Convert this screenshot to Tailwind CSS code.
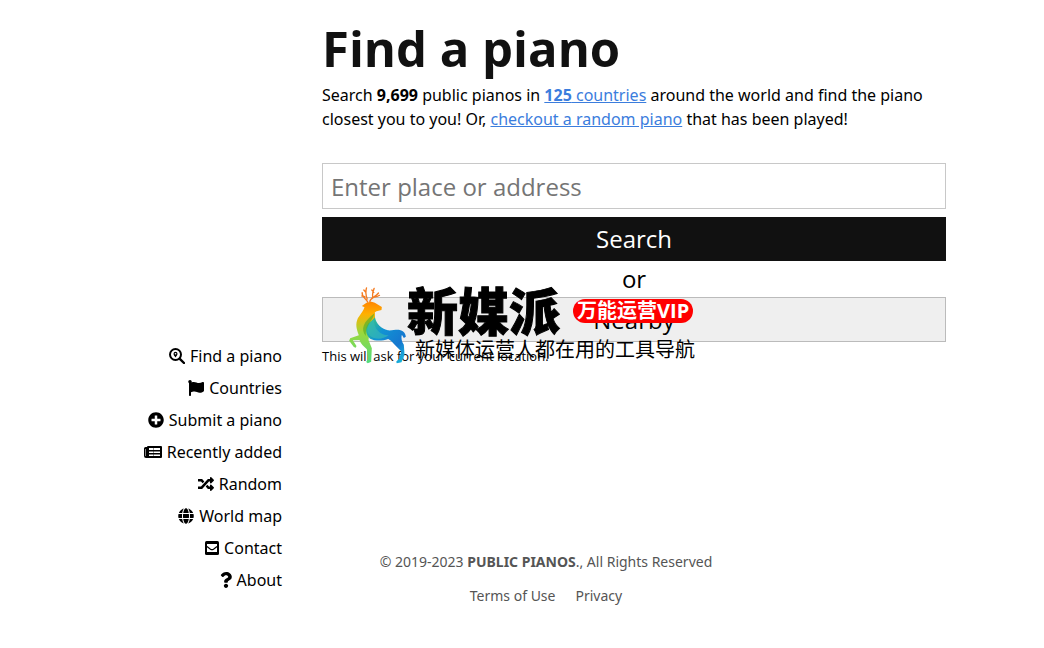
<!DOCTYPE html>
<html lang="en">
<head>
<meta charset="utf-8">
<meta name="viewport" content="width=device-width, initial-scale=1">
<title>Find a piano</title>
<script src="https://cdn.jsdelivr.net/npm/@tailwindcss/browser@4"></script>
</head>
<body class="bg-white font-['Noto_Sans','Noto_Sans_CJK_SC',sans-serif] text-[16px] leading-6 text-black">
<div class="mx-auto grid max-w-4xl grid-cols-[184px_1fr] gap-x-10 px-6 pt-5">

  <nav class="row-span-2 mb-3 flex flex-col items-end self-end" aria-label="Main">
    <a href="#find" class="flex h-8 items-center gap-[5px] whitespace-nowrap">
      <svg class="size-4" viewBox="0 0 16 16" fill="none" stroke="currentColor"><circle cx="6.5" cy="6.5" r="5.5" stroke-width="2"/><path d="M10.8 10.8 15 15" stroke-width="2.4" stroke-linecap="round"/><path d="M6.5 9.500C5.200 7.700 4.500 6.900 4.500 5.700a2 2 0 0 1 4 0C8.500 6.900 7.800 7.700 6.500 9.500z" fill="currentColor" stroke="none"/><circle cx="6.500" cy="5.700" r=".8" fill="#fff" stroke="none"/></svg>
      Find a piano</a>
    <a href="#countries" class="flex h-8 items-center gap-[5px] whitespace-nowrap">
      <svg class="size-4" viewBox="0 0 512 512" fill="currentColor"><path d="M349.565 98.783C295.978 98.783 251.721 64 184.348 64c-24.955 0-47.309 4.384-68.045 12.013a55.947 55.947 0 0 0 3.586-23.562C118.117 24.015 94.806 1.206 66.338.048 34.345-1.254 8 24.296 8 56c0 19.026 9.497 35.825 24 45.945V488c0 13.255 10.745 24 24 24h16c13.255 0 24-10.745 24-24v-94.4c28.311-12.064 63.582-22.122 114.435-22.122 53.588 0 97.844 34.783 165.217 34.783 48.169 0 86.667-16.294 122.505-40.858C506.84 359.452 512 349.571 512 339.045v-243.1c0-23.393-24.269-38.87-45.485-29.016-34.338 15.948-76.454 31.854-116.95 31.854z"/></svg>
      Countries</a>
    <a href="#submit" class="flex h-8 items-center gap-[5px] whitespace-nowrap">
      <svg class="size-4" viewBox="0 0 512 512" fill="currentColor"><path d="M256 8C119 8 8 119 8 256s111 248 248 248 248-111 248-248S393 8 256 8zm144 276c0 6.6-5.4 12-12 12h-92v92c0 6.6-5.4 12-12 12h-56c-6.6 0-12-5.4-12-12v-92h-92c-6.6 0-12-5.4-12-12v-56c0-6.6 5.4-12 12-12h92v-92c0-6.6 5.4-12 12-12h56c6.6 0 12 5.4 12 12v92h92c6.6 0 12 5.4 12 12v56z"/></svg>
      Submit a piano</a>
    <a href="#recent" class="flex h-8 items-center gap-[5px] whitespace-nowrap">
      <svg class="h-4 w-[18px]" viewBox="0 0 18 16"><path d="M4 2h13a1 1 0 0 1 1 1v10a1 1 0 0 1-1 1H2a2 2 0 0 1-2-2V4.500A1.500 1.500 0 0 1 1.500 3H3a1 1 0 0 1 1-1z" fill="currentColor"/><path d="M1.500 5H2v7h-.5zM5 4h11v2H5zM5 7.500h11V9H5zM5 10.500h11V12H5z" fill="#fff"/><path d="M9 4h1v8H9z" fill="currentColor" opacity=".4"/></svg>
      Recently added</a>
    <a href="#random" class="flex h-8 items-center gap-[5px] whitespace-nowrap">
      <svg class="size-4" viewBox="0 0 512 512" fill="currentColor"><path d="M504.971 359.029c9.373 9.373 9.373 24.569 0 33.941l-80 79.984c-15.01 15.01-40.971 4.49-40.971-16.971V416h-58.785a12.004 12.004 0 0 1-8.773-3.812l-70.556-75.596 53.333-57.143L352 336h32v-39.981c0-21.438 25.943-31.998 40.971-16.971l80 79.981zM12 176h84l52.781 56.551 53.333-57.143-70.556-75.596A11.999 11.999 0 0 0 122.785 96H12c-6.627 0-12 5.373-12 12v56c0 6.627 5.373 12 12 12zm372 0v39.984c0 21.46 25.961 31.98 40.971 16.971l80-79.984c9.373-9.373 9.373-24.569 0-33.941l-80-79.981C409.943 24.021 384 34.582 384 56.019V96h-58.785a12.004 12.004 0 0 0-8.773 3.812L96 336H12c-6.627 0-12 5.373-12 12v56c0 6.627 5.373 12 12 12h110.785c3.326 0 6.503-1.381 8.773-3.812L352 176h32z"/></svg>
      Random</a>
    <a href="#map" class="flex h-8 items-center gap-[5px] whitespace-nowrap">
      <svg class="size-4" viewBox="0 0 496 512" fill="currentColor"><path d="M336.5 160C322 70.7 287.8 8 248 8s-74 62.7-88.5 152h177zM152 256c0 22.2 1.2 43.5 3.3 64h185.3c2.1-20.5 3.3-41.8 3.3-64s-1.2-43.5-3.3-64H155.3c-2.1 20.5-3.3 41.8-3.3 64zm324.7-96c-28.6-67.9-86.5-120.4-158-141.6 24.4 33.8 41.2 84.7 50 141.6h108zM177.2 18.4C105.8 39.6 47.8 92.1 19.3 160h108c8.7-56.9 25.5-107.8 49.9-141.6zM487.4 192H372.7c2.1 21 3.3 42.5 3.3 64s-1.2 43-3.3 64h114.6c5.5-20.5 8.6-41.8 8.6-64s-3.1-43.5-8.5-64zM120 256c0-21.5 1.2-43 3.3-64H8.6C3.2 212.5 0 233.8 0 256s3.2 43.500 8.6 64h114.6c-2-21-3.2-42.500-3.2-64zm39.5 96c14.500 89.300 48.700 152 88.500 152s74-62.700 88.500-152h-177zm159.300 141.600c71.400-21.200 129.400-73.700 158-141.600h-108c-8.800 56.900-25.600 107.800-50 141.600zM19.300 352c28.600 67.900 86.500 120.400 158 141.600-24.400-33.800-41.200-84.700-50-141.600h-108z"/></svg>
      World map</a>
    <a href="#contact" class="flex h-8 items-center gap-[5px] whitespace-nowrap">
      <svg class="h-4 w-[14px]" viewBox="0 0 14 16"><rect y="1" width="14" height="14" rx="1.500" fill="currentColor"/><path d="M2 4h10v8H2z" fill="#fff"/><path d="M2 6.500 5.500 9.200Q7 10.200 8.500 9.200L12 6.500" fill="none" stroke="currentColor" stroke-width="1.200"/></svg>
      Contact</a>
    <a href="#about" class="flex h-8 items-center gap-[5px] whitespace-nowrap">
      <svg class="h-4 w-3" viewBox="0 0 384 512" fill="currentColor"><path d="M202.021 0C122.202 0 70.503 32.703 29.914 91.026c-7.363 10.58-5.093 25.086 5.178 32.874l43.138 32.709c10.373 7.865 25.132 6.026 33.253-4.148 25.049-31.381 43.63-49.449 82.757-49.449 30.764 0 68.816 19.799 68.816 49.631 0 22.552-18.617 34.134-48.993 51.164-35.423 19.86-82.299 44.576-82.299 106.405V320c0 13.255 10.745 24 24 24h72.471c13.255 0 24-10.745 24-24v-5.773c0-42.86 125.268-44.645 125.268-160.627C377.504 66.256 286.902 0 202.021 0zM192 373.459c-38.196 0-69.271 31.075-69.271 69.271 0 38.195 31.075 69.27 69.271 69.27s69.271-31.075 69.271-69.271-31.075-69.27-69.271-69.27z"/></svg>
      About</a>
  </nav>

  <main class="relative">
    <h1 class="font-['Open_Sans',sans-serif] text-[49px] leading-14 font-bold text-[#111]">Find a piano</h1>
    <p class="mt-[7px]">Search <strong>9,699</strong> public pianos in <a href="#countries" class="text-[#3b7ddd] underline"><strong>125</strong> countries</a> around the world and find the piano closest you to you! Or, <a href="#random" class="text-[#3b7ddd] underline">checkout a random piano</a> that has been played!</p>
    <form class="mt-8 flex flex-col font-['Open_Sans',sans-serif] text-[24px]">
      <input type="text" aria-label="Place or address" placeholder="Enter place or address" class="h-[46px] border border-[#c8c8c8] px-2 placeholder:text-[#757575]">
      <button type="submit" class="mt-2 h-11 bg-[#111] text-white">Search</button>
      <p class="h-9 text-center leading-9">or</p>
      <button type="button" class="h-[45px] border border-[#bbb] bg-[#efefef]">Nearby</button>
    </form>
    <p class="mt-1 font-['Open_Sans',sans-serif] text-[13px] leading-5">This will ask for your current location.</p>

    <!-- Partner banner floating over the form -->
    <aside class="absolute top-[266px] left-[27px] flex" aria-label="新媒派">
      <svg class="h-[78px] w-[58px]" viewBox="27 18 171 234">
        <defs>
          <linearGradient id="body" x1="0" y1="0" x2="0" y2="1"><stop offset="0" stop-color="#ff8500"/><stop offset=".2" stop-color="#ffb000"/><stop offset=".5" stop-color="#9bd83c"/><stop offset="1" stop-color="#4fdc80"/></linearGradient>
          <linearGradient id="back" x1="0" y1="0" x2="1" y2="1"><stop offset="0" stop-color="#43d36b"/><stop offset=".35" stop-color="#1193d4"/><stop offset=".7" stop-color="#1677cf"/><stop offset="1" stop-color="#18c7df"/></linearGradient>
        </defs>
        <path d="M82 67C78 55 63 52 65 38M73 50 64 48M80 57C76 45 74 35 78 24M76 37 70 30M88 66c0-13 15-13 26-27M97 54c-3-11 0-18 4-29M102 51c7 0 11-2 15-5M100 37l-6-7" fill="none" stroke="#f47b20" stroke-width="4" stroke-linecap="round"/>
        <path d="M78 68 93 65 103 68 124 81 123 90 108 94 103 97 104 119C100 137 86 153 84 180L94 205 92 245 82 250 77 246 82 237 79 208C69 198 61 192 57 180L37 181 48 198 46 203 40 201 26 182 29 175 55 166C48 147 44 133 52 115 64 98 69 91 72 82L64 78z" fill="url(#body)"/>
        <path d="M103 112C108 132 122 147 142 151 158 152 168 147 178 150 190 153 195 161 196 170L190 174 184 164C181 174 184 185 190 194L192 222 183 247 169 250 167 245 177 235 182 214 164 196C157 188 152 181 143 177 126 183 104 184 89 176 74 164 73 141 84 130 92 124 99 118 103 112z" fill="url(#back)"/>
        <path d="M101 117C98 145 119 167 145 166 123 181 101 178 88 167 75 152 80 132 101 117z" fill="#34b8b5" opacity=".7"/>
        <path d="M102 100C96 125 73 137 76 168 60 148 67 127 102 100z" fill="#5eae25" opacity=".7"/>
      </svg>
      <div class="flex flex-col text-black">
        <div class="flex items-center gap-[13px]">
          <strong class="text-[51px] leading-[50px] font-black [-webkit-text-stroke:1px_#000]">新媒派</strong>
          <span class="h-6 rounded-full bg-[#f00] px-1 font-['Open_Sans','Noto_Sans_CJK_SC',sans-serif] text-[20px] leading-6 font-bold text-white">万能运营VIP</span>
        </div>
        <span class="pl-2 text-[20px] leading-7">新媒体运营人都在用的工具导航</span>
      </div>
    </aside>
  </main>

  <footer class="mt-[184px] flex max-w-md flex-col items-center gap-[10px] text-[14px] text-[#555]">
    <p>© 2019-2023 <strong>PUBLIC PIANOS</strong>., All Rights Reserved</p>
    <div class="flex gap-5"><a href="#terms">Terms of Use</a><a href="#privacy">Privacy</a></div>
  </footer>
</div>
</body>
</html>
